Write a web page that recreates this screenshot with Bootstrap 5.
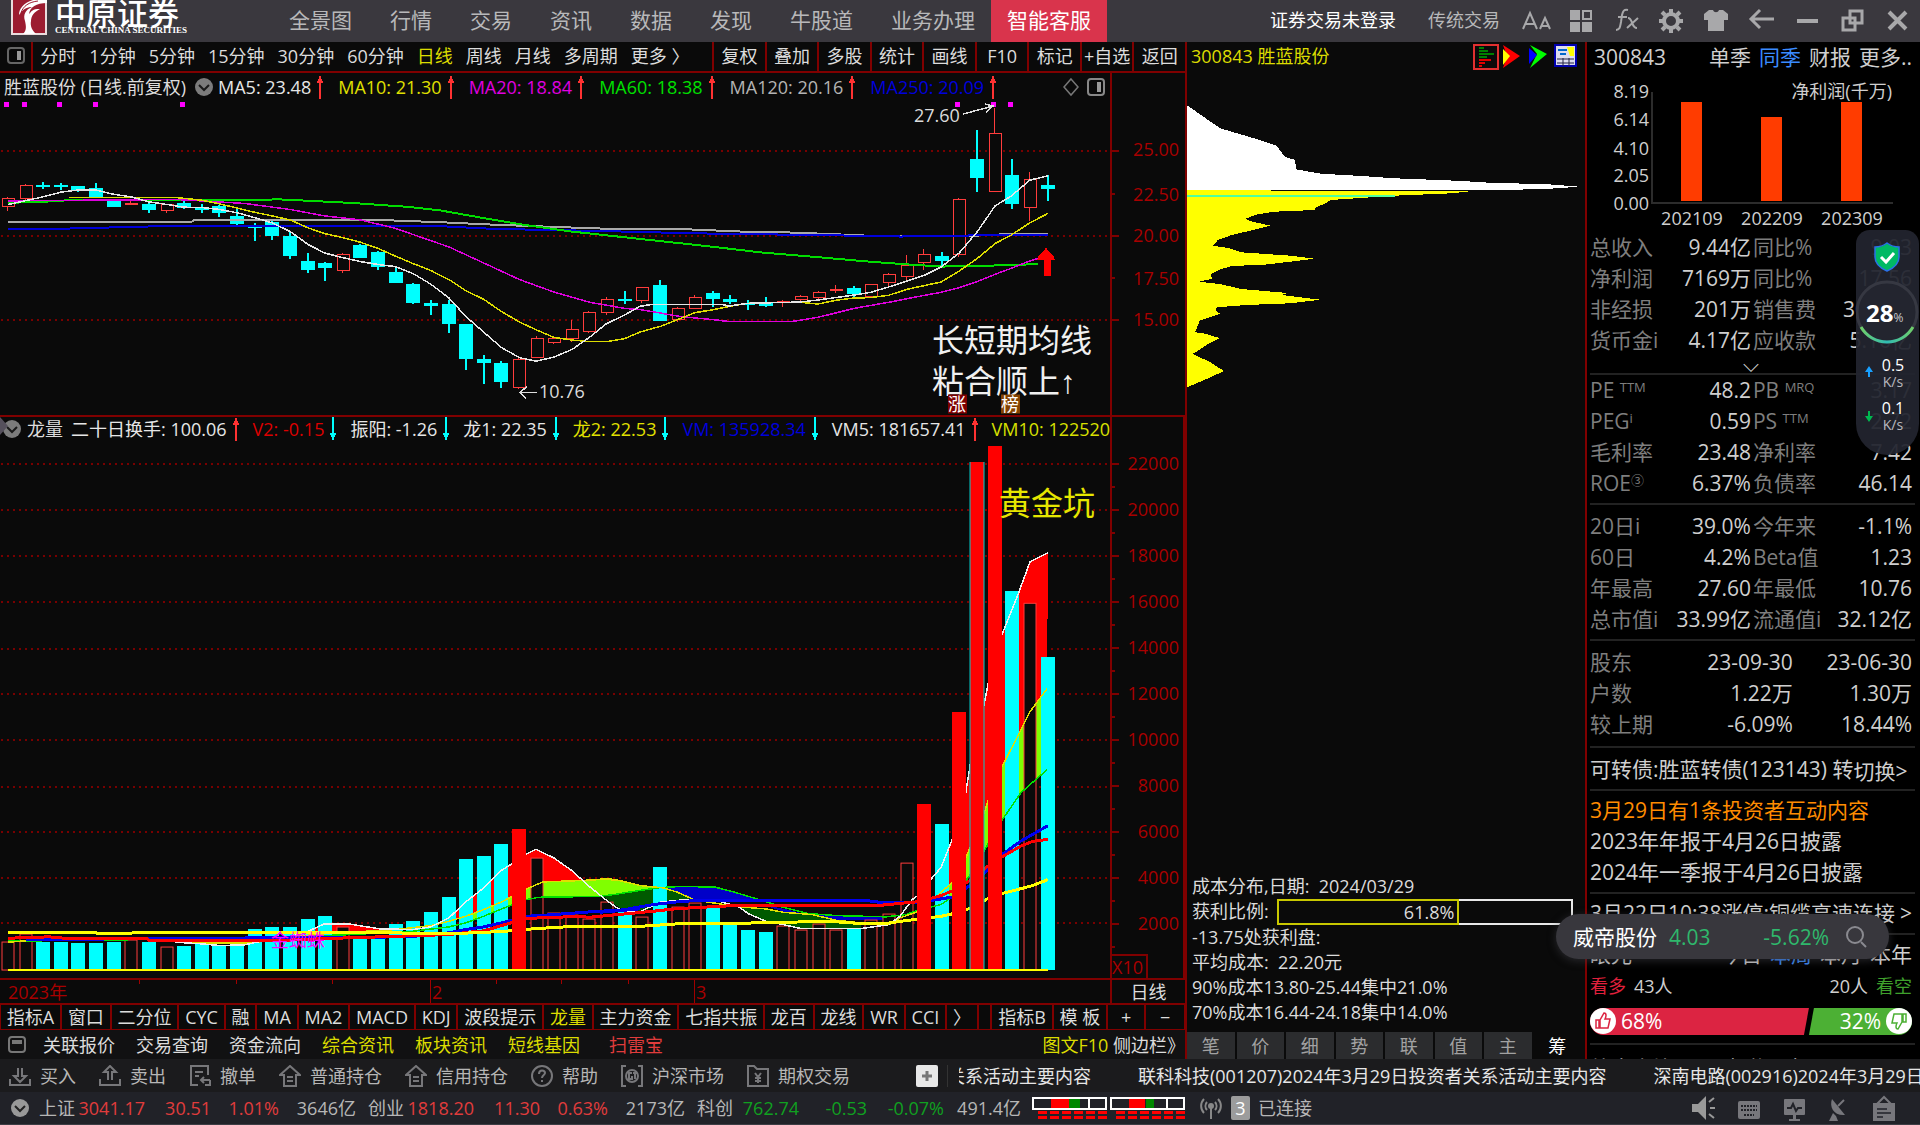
<!DOCTYPE html>
<html lang="zh-CN">
<head>
<meta charset="utf-8">
<meta name="viewport" content="width=device-width, initial-scale=1">
<title>中原证券 胜蓝股份 300843</title>
<link href="https://cdn.jsdelivr.net/npm/bootstrap@5.3.0/dist/css/bootstrap.min.css" rel="stylesheet">
<style>
:root{--line:#800000;--axis:#a80000;--ink:#dcdcdc;--yel:#dcdc00;--cy:#00ffff;--up:#ff3232}
body{background:#0a0a0a;color:var(--ink);font-family:"Open Sans","Noto Sans CJK SC",sans-serif;font-size:18px;line-height:24px;overflow:hidden}
a,button{color:inherit;text-decoration:none;white-space:nowrap}
button{background:none;border:0;padding:0}
svg{display:block;flex:none}
.topbar{height:42px;background:#3a383e;color:#b8b8ba;padding-left:11px;padding-right:12px}
.brand-box{width:278px}
.brand-cn{font-family:"Noto Sans CJK SC",sans-serif;font-weight:500;font-size:31px;line-height:24px;color:#fff}
.brand-en{font-family:"Liberation Serif",serif;font-weight:700;font-size:9px;line-height:12px;color:#fff;white-space:nowrap}
.mainnav{gap:38px;font-size:21px;padding-bottom:3px}
.service{font-size:21px;background:#d9344c;color:#fff;height:42px;padding:0 16px 3px;margin-left:16px}
.toplinks{gap:32px;padding-bottom:3px;margin-right:20px}
.work{display:grid;grid-template-columns:1187fr 398fr 335fr;min-height:0}
.edge{border-right:2px solid var(--line)}
.periods{height:31px;border-bottom:2px solid var(--line)}
.periods button{padding-bottom:2px}
.plist{gap:13px;width:714px;padding-left:7px}
.pin{width:35px;border-right:2px solid var(--line)}
.tools{width:39.9%}
.tool{flex:1 1 0;border-left:2px solid var(--line);overflow:hidden}
.yel{color:var(--yel)}
.plot{min-height:0}
.price{flex:344 1 0;border-bottom:2px solid var(--line)}
.vol{flex:563 1 0;border-bottom:2px solid var(--line)}
.canvas{min-width:0;overflow:hidden}
.canvas svg.draw,.chips svg.draw{position:absolute;inset:0;width:100%;height:100%}
.axis{width:75px;flex:none;border-left:2px solid var(--line);color:var(--axis)}
.vol .axis{border-right:2px solid var(--line)}
.tick-label{position:absolute;right:6px;transform:translateY(-50%)}
.vol .tick-label{right:4px}
.legend-row{position:relative;z-index:2;white-space:nowrap}
.legend-row .ind{display:inline-flex;align-items:center;gap:5px;margin-right:13px}
#maLegend{padding:2px 0 0 4px}
#maLegend .ind{margin-right:14px}
.note{position:absolute;white-space:nowrap;transform:translateY(-50%)}
.big{font-size:32px;color:#f0f0f0}
.big i{font-family:"Liberation Sans",sans-serif;font-style:normal}
.tag{font-size:18px;line-height:19px;color:#fff;width:19px}
.x10{position:absolute;left:0;bottom:0;border:2px solid var(--line);border-left:0;border-bottom:0;line-height:22px;padding:0 3px 0 0}
.dates{height:24px;color:var(--axis);border-bottom:1px solid var(--line)}
.dates .cell{width:75px;border-left:2px solid var(--line);color:var(--ink)}
.datelab{position:absolute;top:0}
.tabs{height:26px;border:1px solid var(--line)}
.tabs button{border-right:2px solid var(--line);flex:1 1 auto;padding:0 5px}
.tabs button.step{flex:0 0 38px;padding:0}
.tabs button:last-child{border-right:0}
.links{height:29px;background:#111112;padding-left:8px;gap:21px}
.chips{flex:1 1 auto;min-height:0}
.cost{padding:0 12px 6px 5px;line-height:25px}
.ratio{height:26px;border:2px solid #e8e8e8;flex:1}
.ratio div{border:2px solid #c8c800;margin:-2px;height:26px;line-height:22px;padding-right:3px;text-align:right}
.minis{gap:2px;height:28px;padding:1px 4px 0 0}
.minis button{flex:1;background:#2b2c2e;color:#a2a2a2}
.minis button.on{background:none;color:#fff}
.fin{background:#000;font-size:21px;line-height:31px;padding:0 8px 0 3px;overflow:hidden;color:#cfcfcf;border-left:2px solid var(--line)}
.rule{height:2px;background:#222;margin-right:-3px}
.fin table{width:100%;table-layout:fixed}
.fin td,.fin th{padding:0;height:31px;white-space:nowrap;font-weight:400}
.fin th{color:#7e7e7e}
.fin td{text-align:right}
.fin th.mid{padding-left:2px}
.fin sup{font-size:13px;top:-6px}
#t3{margin-top:6px}
#t4{margin:6px 0}
.bond{margin:7px 0 4px;line-height:28px}
.bond a{padding-top:2px}
.profit{height:159px;position:relative;font-size:18px;line-height:20px}
.profit .yl{position:absolute;right:263px;transform:translateY(-50%)}
.profit .xl{position:absolute;transform:translate(-50%,-50%)}
.profit svg{position:absolute;top:0;left:0}
.vote{height:27px;color:#fff;line-height:27px;margin:6px 0 8px}
.vote .bull{flex:68;background:#dc2442;clip-path:polygon(0 0,100% 0,calc(100% - 5px) 100%,0 100%);border-radius:14px 0 0 14px}
.vote .bear{flex:32;background:#4cb034;clip-path:polygon(5px 0,100% 0,100% 100%,0 100%);border-radius:0 14px 14px 0}
#voteText{font-size:18px;padding-top:1px}
.orders{height:33px;background:#1b1b1d;color:#b6b6b6}
.order-list{width:959px;padding-left:9px}
.orders button{display:inline-flex;align-items:center;gap:9px;margin-right:23px}
.orders .bar{width:1px;height:22px;background:#333;margin:0 11px 0 9px}
.ic{fill:none;stroke:#77777a;stroke-width:2}
.news{overflow:hidden;white-space:nowrap;color:#e6e6e6;gap:47px}
.news span:first-child{margin-left:-12px}
.status{height:33px;background:#212228;border-bottom:1px solid #3d3d44;color:#b6b6b6}
.q{display:inline-block;text-align:right;white-space:nowrap}
.w-0{width:70px}.w-a{width:66px}.w-b{width:66px}.w-c{width:68px}.w-d{width:77px}
.rd{color:#e03c3c}.gn{color:#10a020}
.cnt{background:#9c9c9c;color:#fff;width:19px;height:24px;border-radius:2px;text-align:center}
.speed{position:absolute;right:1px;top:230px;width:63px;height:225px;background:rgba(34,36,47,.94);border-radius:14px 14px 32px 32px;color:#fff;z-index:5}
.speed .num{position:absolute;font-size:16px;line-height:18px;width:40px;left:17px;text-align:center}
.speed .up{top:126px}.speed .down{top:169px}
.speed .unit{font-size:14px;line-height:16px;color:#b8b8be}
.speed .pct{position:absolute;left:10px;top:68px;font-size:24px;line-height:30px;font-weight:700}
.speed .pct span{font-size:12px;font-weight:400;color:#c8c8cc}
.pill{position:absolute;right:31px;top:914px;width:333px;height:45px;border-radius:23px;background:#38373d;box-shadow:0 2px 8px rgba(60,60,66,.6);z-index:5;font-size:21px;color:#fff;padding:0 20px 0 17px}
.pill .g{color:#2fb86c}
.blu{color:#3a8cff}.org{color:#ff8c00}.bullc{color:#e0203c}.bearc{color:#3fa02c}
</style>
<script src="https://cdn.jsdelivr.net/npm/bootstrap@5.3.0/dist/js/bootstrap.bundle.min.js"></script>
</head>
<body class="d-flex flex-column vh-100 position-relative">

<header class="topbar d-flex align-items-center flex-shrink-0">
  <div class="brand-box d-flex align-items-start h-100 flex-shrink-0">
    <svg width="36" height="35" viewBox="0 0 36 35"><rect width="36" height="35" fill="#e9dcdd"/><rect x="2" y="0" width="32" height="33" fill="#9c1c30"/><path d="M36 0H22C12 3 8 9 8 15c4-6 8-8 13-8-7 3-9 8-7 14 1 5 2 9-2 13h13c-4-4-6-8-5-13 0-5 3-9 9-12-8 0-8 2-11 5 1-7 7-11 18-11z" fill="#fff"/><path d="M10 13C12 6 18 2 27 1" stroke="#9c1c30" fill="none"/></svg>
    <div class="ps-2"><div class="brand-cn">中原证券</div><div class="brand-en">CENTRAL CHINA SECURITIES</div></div>
  </div>
  <nav class="mainnav d-flex">
    <a href="#">全景图</a><a href="#">行情</a><a href="#">交易</a><a href="#">资讯</a><a href="#">数据</a><a href="#">发现</a><a href="#">牛股道</a><a href="#">业务办理</a>
  </nav>
  <button class="service">智能客服</button>
  <div class="ms-auto d-flex align-items-center">
    <div class="toplinks d-flex"><a href="#" class="text-white">证券交易未登录</a><a href="#">传统交易</a></div>
    <svg width="388" height="40" viewBox="1520 0 388 40" fill="none" stroke="#a8a8aa" stroke-width="2">
      <path d="M1523 28l7-16 7 16M1525 23h10M1540 28l5-11 5 11M1541 25h8"/>
      <g fill="#a8a8aa" stroke="none"><path d="M1570 9h10v10h-10zM1570 21h10v10h-10zM1582 21h10v10h-10z"/></g><rect x="1583" y="10" width="8" height="8"/>
      <path d="M1616 29c4 0 4-3 5-8l1-7c1-4 2-6 6-5M1618 16h9M1628 17c5 0 3 10 9 10M1638 17l-11 10"/>
      <circle cx="1671" cy="20" r="7" stroke-width="4"/><path d="M1671 8v4M1671 28v4M1659 20h4M1679 20h4M1662 11l3 3M1677 26l3 3M1680 11l-3 3M1665 26l-3 3" stroke-width="4"/>
      <path d="M1709 9l-5 4v6h4v11h16V19h4v-6l-5-4h-4c-1 3-5 3-6 0z" fill="#a8a8aa" stroke="none"/>
      <path d="M1760 9l-9 9 9 9M1751 18h23" stroke-width="3"/>
      <path d="M1797 20h21M1889 11l17 17M1906 11l-17 17" stroke-width="4"/>
      <path d="M1850 10h12v12h-12zM1843 17h12v12h-12z" stroke-width="3"/>
    </svg>
  </div>
</header>

<main class="work flex-grow-1">
  <section class="d-flex flex-column edge" style="min-width:0">
    <div class="periods d-flex flex-shrink-0">
      <button class="pin d-flex align-items-center justify-content-center" aria-label="侧栏"><svg width="18" height="18"><rect x="1" y="1" width="16" height="15" rx="3" fill="none" stroke="#666" stroke-width="2"/><path d="M10 4h4v9h-4z" fill="#999"/></svg></button>
      <div class="plist d-flex align-items-center flex-grow-1">
        <button>分时</button><button>1分钟</button><button>5分钟</button><button>15分钟</button><button>30分钟</button><button>60分钟</button><button class="yel">日线</button><button>周线</button><button>月线</button><button>多周期</button><button>更多 〉</button>
      </div>
      <div class="tools d-flex flex-shrink-0">
        <button class="tool">复权</button><button class="tool">叠加</button><button class="tool">多股</button><button class="tool">统计</button><button class="tool">画线</button><button class="tool">F10</button><button class="tool">标记</button><button class="tool">+自选</button><button class="tool">返回</button>
      </div>
    </div>

    <div class="plot price d-flex">
      <div class="canvas flex-grow-1 position-relative" id="priceCanvas">
        <div class="legend-row d-flex align-items-center" id="maLegend"></div>
      </div>
      <div class="axis position-relative" id="priceAxis"></div>
    </div>
    <div class="plot vol d-flex">
      <div class="canvas flex-grow-1 position-relative" id="volCanvas">
        <div class="legend-row d-flex align-items-center" id="volLegend"></div>
      </div>
      <div class="axis position-relative" id="volAxis"><span class="x10">X10</span></div>
    </div>

    <div class="dates d-flex flex-shrink-0">
      <div class="flex-grow-1 position-relative" id="dateAxis"></div>
      <div class="cell text-center">日线</div>
    </div>
    <div class="tabs d-flex flex-shrink-0">
      <button>指标A</button><button>窗口</button><button>二分位</button><button>CYC</button><button>融</button><button>MA</button><button>MA2</button><button>MACD</button><button>KDJ</button><button>波段提示</button><button class="yel">龙量</button><button>主力资金</button><button>七指共振</button><button>龙百</button><button>龙线</button><button>WR</button><button>CCI</button><button>〉</button><button aria-label="空"></button><button>指标B</button><button>模 板</button><button class="step">+</button><button class="step">−</button>
    </div>
    <div class="links d-flex align-items-center flex-shrink-0">
      <svg width="14" height="19" viewBox="2 0 14 19" overflow="visible"><rect x="3" y="2" width="16" height="15" rx="3" fill="none" stroke="#777" stroke-width="2"/><path d="M6 5h10v4H6z" fill="#777"/></svg>
      <a href="#">关联报价</a><a href="#">交易查询</a><a href="#">资金流向</a><a href="#" class="yel">综合资讯</a><a href="#" class="yel">板块资讯</a><a href="#" class="yel">短线基因</a><a href="#" class="rd ms-2">扫雷宝</a>
      <span class="ms-auto"><a href="#" class="yel">图文F10</a> <a href="#">侧边栏》</a></span>
    </div>
  </section>

  <section class="d-flex flex-column" style="min-width:0">
    <div class="d-flex align-items-center ps-1 pe-2 pb-1 flex-shrink-0" style="height:31px">
      <span class="yel">300843 胜蓝股份</span>
      <svg class="ms-auto" width="104" height="28" viewBox="1473 43 104 28">
        <rect x="1474" y="46" width="24" height="24" fill="#0a0a0a" stroke="#e03030" stroke-width="2"/>
        <path d="M1479 49h5M1479 52h9M1479 55h15M1479 58h8" stroke="#008000" stroke-width="2"/><path d="M1479 61h12M1479 64h6M1479 67h3" stroke="#e00000" stroke-width="2"/>
        <path d="M1503 46l17 11-17 12 4-12z" fill="#f00"/><path d="M1503 50l7 7-7 9z" fill="#ff0"/>
        <path d="M1530 46l17 9-17 14 7-14z" fill="#0f0"/><path d="M1529 49l8 7-8 9z" fill="#00f"/>
        <rect x="1555" y="46" width="21" height="21" fill="#dde" stroke="#0000b0" stroke-width="2"/><path d="M1567 48h7v9h-4z" fill="#ff0"/><path d="M1558 51h9M1560 55h6" stroke="#06c" stroke-width="2"/><path d="M1557 60h17M1557 64h17M1563 59v8M1569 59v8" stroke="#224" />
      </svg>
    </div>
    <div class="chips position-relative" id="chips"></div>
    <div class="cost flex-shrink-0">
      <div>成本分布,日期:&nbsp; 2024/03/29</div>
      <div class="d-flex"><span class="me-2">获利比例:</span><div class="ratio"><div id="ratioFill">61.8%</div></div></div>
      <div>-13.75处获利盘:</div>
      <div>平均成本:&nbsp; 22.20元</div>
      <div>90%成本13.80-25.44集中21.0%</div>
      <div>70%成本16.44-24.18集中14.0%</div>
    </div>
    <div class="minis d-flex flex-shrink-0"><button>笔</button><button>价</button><button>细</button><button>势</button><button>联</button><button>值</button><button>主</button><button class="on">筹</button></div>
  </section>

  <section class="fin">
    <div class="d-flex ps-1"><span>300843</span><div class="ms-auto d-flex gap-2"><a href="#">单季</a><a href="#" class="blu">同季</a><a href="#">财报</a><a href="#">更多..</a></div></div>
    <div class="profit" id="profit"></div>
    <table id="t1"></table>
    <div class="text-center" style="line-height:17px">⌵</div>
    <div class="rule"></div>
    <table id="t2"></table>
    <div class="rule mt-1"></div>
    <table id="t3"></table>
    <div class="rule mt-1"></div>
    <table id="t4"></table>
    <div class="rule"></div>
    <div class="bond d-flex text-nowrap"><span>可转债:胜蓝转债(123143) 转</span><a href="#">切换&gt;</a></div>
    <div class="rule mb-1"></div>
    <div class="org">3月29日有1条投资者互动内容</div>
    <div>2023年年报于4月26日披露</div>
    <div>2024年一季报于4月26日披露</div>
    <div class="rule mt-1 mb-1"></div>
    <div class="d-flex justify-content-between text-nowrap"><span>3月22日10:38涨停:铜缆高速连接</span><a href="#">&gt;</a></div>
    <div class="rule mt-1 mb-1"></div>
    <div class="d-flex justify-content-end gap-2"><span class="me-auto">眼光</span><span>今日</span><span class="blu">本周</span><span>本月</span><span>本年</span></div>
    <div class="d-flex" id="voteText"><span class="bullc">看多</span><span class="ms-2">43人</span><span class="ms-auto me-2">20人</span><span class="bearc">看空</span></div>
    <div class="vote d-flex">
      <div class="bull d-flex align-items-center"><svg width="27" height="27"><circle cx="13" cy="13" r="13" fill="#fff"/><path d="M6 12h3v8H6zM10 12l4-7c3 0 2 4 1 6h5l-2 9h-8z" fill="none" stroke="#dc2442" stroke-width="1.5"/></svg><span class="ps-1">68%</span></div>
      <div class="bear d-flex align-items-center justify-content-end"><span class="pe-1">32%</span><svg width="27" height="27"><circle cx="14" cy="13" r="13" fill="#fff"/><path d="M21 14h-3V6h3zM17 14l-4 7c-3 0-2-4-1-6H7l2-9h8z" fill="none" stroke="#4cb034" stroke-width="1.5"/></svg></div>
    </div>
    <div class="rule mb-2"></div>
    <div class="d-flex justify-content-between"><span>外盘占比</span><span>机构研报</span><span>3.3%</span></div>
  </section>
</main>

<div class="orders d-flex align-items-center flex-shrink-0">
  <div class="order-list d-flex align-items-center text-nowrap flex-shrink-0">
    <button><svg width="22" height="22" class="ic"><path d="M1 14v6h20v-6M9 3v8H5l6 6 6-6h-4V3"/></svg>买入</button>
    <button><svg width="22" height="22" class="ic"><path d="M1 14v6h20v-6M9 15V7H5l6-6 6 6h-4v8"/></svg>卖出</button>
    <button><svg width="22" height="22" class="ic"><path d="M9 20H2V1h17v9M6 7h8M6 11h4M21 15h-8M15 12l-3 3 3 3M21 15v5h-5"/></svg>撤单</button>
    <button><svg width="22" height="22" class="ic"><path d="M1 10L11 1l10 9h-4v11H5V10zM8 12h6M8 16h6"/></svg>普通持仓</button>
    <button><svg width="22" height="22" class="ic"><path d="M1 10L11 1l10 9h-4v11H5V10zM8 12h6M8 16h6"/></svg>信用持仓</button>
    <button><svg width="22" height="22" class="ic"><circle cx="11" cy="11" r="10"/><path d="M8 9c0-5 6-4 6-1 0 2-3 2-3 5M11 15v2"/></svg>帮助</button>
    <button><svg width="22" height="22" class="ic"><path d="M5 1H1v20h4M17 1h4v20h-4"/><circle cx="11" cy="11" r="6"/><path d="M11 8H8v6h3v-3M12 8h4M14 8v6"/></svg>沪深市场</button>
    <button><svg width="22" height="22" class="ic"><path d="M1 21V1h6l3 3h11v17zM8 8l3 4 3-4M11 12v6M8 13h6M8 16h6"/></svg>期权交易</button>
    <button class="ms-auto me-0" aria-label="添加"><svg width="22" height="22"><rect width="22" height="22" rx="2" fill="#e8e8e8"/><path d="M6 11h10M11 6v10" stroke="#777" stroke-width="3"/></svg></button>
    <span class="bar"></span>
  </div>
  <div class="news d-flex flex-grow-1"><span>关系活动主要内容</span><span>联科科技(001207)2024年3月29日投资者关系活动主要内容</span><span>深南电路(002916)2024年3月29日</span></div>
</div>

<footer class="status d-flex align-items-center flex-shrink-0">
  <svg width="39" height="20" viewBox="0 0 39 20"><circle cx="20" cy="10" r="9" fill="#999"/><path d="M15 8l5 5 5-5" fill="none" stroke="#222" stroke-width="2"/></svg>
  <span>上证</span><span class="q rd w-0">3041.17</span><span class="q rd w-b">30.51</span><span class="q rd w-c">1.01%</span><span class="q w-d">3646亿</span>
  <span class="ms-2 ps-1">创业</span><span class="q rd w-0">1818.20</span><span class="q rd w-b">11.30</span><span class="q rd w-c">0.63%</span><span class="q w-d">2173亿</span>
  <span class="ms-2 ps-1">科创</span><span class="q gn w-a">762.74</span><span class="q gn w-c">-0.53</span><span class="q gn w-d">-0.07%</span><span class="q w-d">491.4亿</span>
  <svg class="ms-2" width="162" height="24" viewBox="1029 0 162 24" id="meters"></svg>
  <svg class="ms-2" width="24" height="22" fill="none" stroke="#888" stroke-width="2"><circle cx="12" cy="9" r="2" fill="#888"/><path d="M12 10v12M8 5a6 6 0 000 8M16 5a6 6 0 010 8M5 2a10 10 0 000 14M19 2a10 10 0 010 14"/></svg>
  <span class="cnt ms-2 me-2">3</span><span>已连接</span>
  <svg class="ms-auto" width="228" height="30" viewBox="1692 0 228 30" fill="#77777c">
    <path d="M1692 11h6l8-8v24l-8-8h-6z" fill="#999"/><path d="M1709 9l5-4M1710 15h5M1709 21l5 4" stroke="#999" stroke-width="2"/>
    <rect x="1738" y="8" width="22" height="18" rx="2"/><path d="M1741 13h16M1741 17h16M1744 22h10" stroke="#212228" stroke-width="2" stroke-dasharray="2 1"/>
    <rect x="1784" y="6" width="21" height="16" rx="1"/><path d="M1789 26h11v2h-11zM1793 22h3v4h-3z"/><path d="M1787 15h4l2-4 3 7 2-3h4" fill="none" stroke="#212228" stroke-width="2"/>
    <path d="M1832 6c-3 8 2 17 13 16zM1833 20l-4 8h9l-2-5z"/><path d="M1838 13l6-6" stroke="#77777c" stroke-width="2"/>
    <rect x="1873" y="10" width="22" height="18"/><path d="M1877 11l7-7 7 7" fill="none" stroke="#77777c" stroke-width="2"/><path d="M1877 16h10M1877 20h14M1877 24h6" stroke="#212228" stroke-width="1.5"/>
  </svg>
</footer>

<aside class="speed">
  <svg width="63" height="225" class="position-absolute">
    <defs><linearGradient id="arc"><stop offset="0" stop-color="#6fce6a"/><stop offset=".5" stop-color="#2fbcb4"/><stop offset="1" stop-color="#6fce6a"/></linearGradient></defs>
    <path d="M31 13c4 3 8 4 12 4v10c0 7-5 11-12 14-7-3-12-7-12-14V17c4 0 8-1 12-4z" fill="#00b964" stroke="#2a70e8" stroke-width="1.5"/>
    <path d="M25 27l5 5 8-9" fill="none" stroke="#fff" stroke-width="3"/>
    <circle cx="31" cy="82" r="30" fill="#23252f" stroke="#363842" stroke-width="3"/>
    <path d="M5 97a30 30 0 0052 0" fill="none" stroke="url(#arc)" stroke-width="3"/>
    <path d="M13 136l4 6h-3v5h-2v-5H9z" fill="#18a0ff"/><path d="M13 192l-4-6h3v-5h2v5h3z" fill="#00b850"/>
  </svg>
  <div class="pct">28<span>%</span></div>
  <div class="num up"><div>0.5</div><div class="unit">K/s</div></div>
  <div class="num down"><div>0.1</div><div class="unit">K/s</div></div>
</aside>

<div class="pill d-flex align-items-center"><span>威帝股份</span><span class="g ms-2 ps-1">4.03</span><span class="g ms-auto me-3">-5.62%</span><svg width="24" height="24" fill="none" stroke="#8a8a90" stroke-width="2"><circle cx="10" cy="10" r="8"/><path d="M16 17l5 5"/></svg></div>

<script>
const $ = id => document.getElementById(id);
const STEP = 17.62, cx = i => Math.round(8 + i * STEP);
const rect = (x,y,w,h,a) => `<rect x="${x}" y="${y}" width="${w}" height="${h}" ${a}/>`;
const line = (pts,c,w=1.5) => `<path d="M${pts.map(p=>p.map(v=>v.toFixed(1)).join(' ')).join('L')}" fill="none" stroke="${c}" stroke-width="${w}"/>`;
const poly = (pts,c) => `<path d="M${pts.map(p=>p.map(v=>v.toFixed(1)).join(' ')).join('L')}Z" fill="${c}"/>`;
const pairs = a => a.reduce((r,v,i)=>(i%2?r[r.length-1].push(v):r.push([v]),r),[]);
const grid = ys => ys.map(y=>`<path d="M1 ${y}H1109" stroke="#780000" stroke-width="2" stroke-dasharray="2 4"/>`).join('');
const pct = (v,o,s) => ((v-o)/s*100).toFixed(2)+'%';
const svg = (host,vb,body) => host.insertAdjacentHTML('afterbegin',`<svg class="draw" viewBox="${vb}" preserveAspectRatio="none" shape-rendering="crispEdges">${body}</svg>`);

/* ---- indicator legends ---- */
const arrow = d => d>0 ? '<svg width="8" height="24"><path d="M4 24V1M1 7h6M2 5h4M3 3h2" stroke="#ff3232" stroke-width="2" fill="none"/></svg>'
                       : '<svg width="8" height="24"><path d="M4 0v23M1 17h6M2 19h4M3 21h2" stroke="#0ff" stroke-width="2" fill="none"/></svg>';
const item = ([t,c,d]) => `<span class="ind" style="color:${c}">${t}${arrow(d)}</span>`;
const chev = '<svg width="20" height="20"><circle cx="10" cy="10" r="9" fill="#7c7c7c"/><path d="M5 8l5 5 5-5" fill="none" stroke="#1a1a1a" stroke-width="2"/></svg>';
$('maLegend').innerHTML = `<span class="me-2">胜蓝股份 (日线.前复权)</span>${chev}<span class="ps-1"></span>` +
 [['MA5: 23.48','#e6e6e6',1],['MA10: 21.30','#e0e000',1],['MA20: 18.84','#e000e0',1],['MA60: 18.38','#00e000',1],['MA120: 20.16','#b4b4b4',1],['MA250: 20.09','#0000dc',1]].map(item).join('') +
 '<svg class="ms-auto me-1" width="44" height="20" fill="none"><path d="M9 2l7 8-7 8-7-8z" stroke="#777" stroke-width="1.5"/><rect x="26" y="2" width="16" height="16" rx="3" stroke="#888" stroke-width="2"/><path d="M35 5h4v10h-4z" fill="#999"/></svg>';
$('volLegend').innerHTML = `<svg width="23" height="24"><circle cx="12" cy="12" r="9" fill="#7c7c7c"/><path d="M7 10l5 5 5-5" fill="none" stroke="#1a1a1a" stroke-width="2"/><path d="M0 0l8 9-8 9z" fill="#55505c"/></svg><span class="mx-1">龙量</span><span class="ps-1"></span>` +
 [['二十日换手: 100.06','#e6e6e6',1],['V2: -0.15','#dc0000',-1],['振阳: -1.26','#e6e6e6',-1],['龙1: 22.35','#e6e6e6',-1],['龙2: 22.53','#e0e000',-1],['VM: 135928.34','#0000dc',-1],['VM5: 181657.41','#e6e6e6',1],['VM10: 122520','#d8e000',1]].map(item).join('');

/* ---- daily candles: dir, high, top, bottom, low (three units per pixel) ---- */
const C = `r592,595,620,634 r553,555,597,610 c547,554,558,567 c549,554,558,570 c557,558,570,575 c549,563,590,590 c600,601,621,621 r603,609,615,615 c606,612,630,638 r612,612,633,638 c602,608,624,628 c612,624,628,638 c615,617,640,652 c625,647,671,674 c668,679,683,724 c661,667,707,719 c697,708,769,778 c760,783,809,818 c787,788,805,842 r760,763,812,818 c733,735,773,773 c752,757,801,809 c800,815,850,850 c850,851,909,913 c900,909,917,945 c899,913,971,999 c971,972,1076,1111 c1066,1076,1088,1152 c1084,1089,1147,1165 r1075,1077,1164,1168 r1008,1014,1074,1074 r1009,1015,1028,1033 r959,988,1016,1025 r932,937,997,1000 r892,898,938,944 c873,896,901,912 r860,862,903,908 c841,855,963,963 r922,925,961,966 r886,892,926,927 c873,878,896,922 c886,897,907,913 c900,908,911,930 c891,908,917,922 r900,903,910,921 r886,889,899,905 r873,875,894,896 r855,867,871,879 c858,865,883,890 r851,853,890,893 r818,821,850,857 r765,794,830,843 r747,763,788,810 c755,767,782,800 r594,596,764,770 c391,478,535,576 r323,398,575,575 c476,526,611,626 r517,536,623,663 c526,554,567,602`.split(' ');
let s = grid([151,236,320]);
C.forEach((k,i)=>{
  const [h,t,b,l]=k.slice(1).split(',').map(v=>Math.round(v/3)), x=cx(i), up=k[0]==='r';
  if(up){ s+=rect(x-6,t+.5,12,Math.max(b-t-1,1),'fill="#0a0a0a" stroke="#ff3c3c"')+(h<t?rect(x-1,h,1,t-h,'fill="#ff3c3c"'):'')+(l>b?rect(x-1,b,1,l-b,'fill="#ff3c3c"'):''); }
  else s+=rect(x-7,t,14,Math.max(b-t,2),'fill="#0ff"')+rect(x-1,h,2,l-h,'fill="#0ff"');
});
const M = (a,b)=>pairs(a).map(([x,y])=>[x/2.45,y/3]).concat(pairs(b).map(([x,y])=>[640+x/2.45,y/3]));
s+=line(M([20,664,470,664,475,660,945,660,1080,666,1200,673,1310,678,1470,685],[110,687,245,694,370,697,460,701,550,706,830,706,930,700,999,700]),'#aaa',2);
s+=line(M([20,687,170,685,390,678,1080,678,1210,686,1380,690,1568,695],[115,699,290,702,460,705,640,709,850,705,999,705]),'#0000dc',2);
s+=line(M([20,608,120,604,170,600,690,598,860,608,1000,620,1080,631,1200,657,1290,675,1400,694,1500,707,1568,716],[30,720,160,737,300,757,430,770,560,784,650,792,740,799,930,794,975,790]),'#00dc00',2);
s+=line(M([20,602,430,598,494,602,600,610,711,628,795,647,883,659,968,684,1012,703,1100,740,1185,788,1273,838,1357,875,1445,906,1530,924,1568,928],[50,938,100,949,180,958,220,964,370,964,436,951,525,924,609,906,697,885,738,876,782,862,826,844,870,822,910,804,955,782,975,774]),'#dc00dc');
s+=line(M([170,592,430,592,494,600,538,611,582,624,623,636,667,647,711,659,755,683,795,700,839,712,883,726,927,745,968,767,1012,790,1056,811,1100,838,1141,871,1185,897,1229,934,1273,965,1313,988,1357,1011,1402,1019,1445,1024,1486,1024,1530,1015],[0,995,50,978,92,958,135,937,180,928,220,918,264,909,308,907,392,906,436,911,480,900,525,893,565,892,609,885,654,867,738,845,782,812,826,775,870,730,910,704,955,668,999,640]),'#dcdc00');
s+=line(M([20,613,105,590,149,576,193,569,237,570,277,582,321,590,365,605,409,613,450,621,494,622,538,628,582,638,623,652,667,668,711,694,755,733,795,758,839,772,883,784,927,793,968,799,1012,820,1056,852,1100,893,1141,948,1185,995,1229,1042,1273,1072,1313,1082,1357,1070,1402,1047,1445,1010,1486,970,1530,944],[0,918,30,912,200,912,217,917,264,909,392,905,436,899,525,884,565,876,609,860,654,842,697,825,738,800,782,758,826,695,870,617,910,587,955,540,999,527]),'#e6e6e6');
[6,24,59,95,182,957,993,1010].forEach(x=>s+=rect(x-2,102,5,5,'fill="#f0f"'));
s+='<path d="M1046 247c2 5 9 8 9 13h-4v16h-7v-16h-7c0-5 7-8 9-13z" fill="#f00"/><path d="M963 114l30-8M985 104l8 2-7 6M520 392h17M527 386l-7 6 6 6" stroke="#ddd" stroke-width="1.5" fill="none"/>';
svg($('priceCanvas'),'0 73 1110 342',s);
const note=(id,t,x,y,c,oy,oh,col,bg)=>$(id).insertAdjacentHTML('beforeend',`<span class="note ${c}" style="left:${pct(x,0,1110)};top:${pct(y,oy,oh)};${col?'color:'+col+';':''}${bg?'background:'+bg:''}">${t}</span>`);
note('priceCanvas','27.60',914,115,'',73,342); note('priceCanvas','10.76',539,391,'',73,342);
note('priceCanvas','长短期均线',932,340,'big',73,342); note('priceCanvas','粘合顺上<i>↑</i>',932,381,'big',73,342);
note('priceCanvas','涨',948,404,'tag',73,342,'','#800000'); note('priceCanvas','榜',1001,404,'tag',73,342,'','#844200');
[['25.00',149],['22.50',194],['20.00',235],['17.50',278],['15.00',319]].forEach(([t,y])=>$('priceAxis').insertAdjacentHTML('beforeend',`<span class="tick-label" style="top:${pct(y,73,342)}">${t}</span>`));
svg($('priceAxis'),'0 73 75 342',[151,194,236,278,320].map((y,i)=>`<path d="M0 ${y}h${i%2?3:7}" stroke="#800000" stroke-width="2"/>`).join(''));

/* ---- volume: r hollow, R solid, c cyan; top edge, three units per pixel from 800 ---- */
const V=`r427 r402 c425 c425 c430 c430 c425 r420 c425 r440 c438 c430 c438 c438 c386 c381 c381 c358 c349 r380 c417 c415 c372 c363 c336 c291 c178 c169 c133 R88 r175 r338 r345 r358 r307 c330 r350 c201 r320 r310 c325 c376 c390 c395 r378 r390 r373 r390 c386 r360 r342 r188 R12 c71 R-263 R-1014 R-1063 c-626 r-590 c-429`.split(' ');
const A=a=>pairs(a).map(([x,y])=>[x/2.45,800+y/3]), B=a=>pairs(a).map(([x,y])=>[600+x/2.45,800+y/3]);
let v=grid([464,510,556,602,649,694,740,787,832,878,923]);
const tailW=[[941,868],[953,838],[965,798],[971,760],[983,710],[990,675],[1001,637],[1019,592],[1030,562],[1048,553]];
const tailY=[[941,893],[953,882],[965,860],[984,814],[990,795],[1001,769],[1021,730],[1030,712],[1047,689]];
const tailG=[[941,905],[953,897],[969,877],[986,848],[1001,822],[1021,793],[1047,770]];
v+=poly([...tailW,...tailY.slice().reverse()],'#f00');
v+=poly([...tailY,...tailG.slice().reverse()],'#80ff00');
v+=poly(A([755,395,795,373,860,374,930,388,1012,392,860,395]),'#f00');
v+=poly(A([1056,382,1100,355,1141,307,1185,265,1229,212,1260,188,1290,163,1313,149,1357,175,1402,214,1427,243,1330,247,1290,268,1229,307,1141,350]),'#f00');
v+=poly([...A([1141,350,1229,307,1290,268,1330,247,1420,243,1500,238]),...B([45,242,100,258,147,264,100,272,45,283,0,290]),...A([1320,293,1290,300,1229,328,1141,370])],'#80ff00');
v+=poly([...A([1480,292]),...B([0,290,45,283,100,272,147,266,190,278,230,300,190,302,147,308,110,335,60,335])],'#005a00');
v+=poly(B([147,264,190,261,280,262,330,278,390,302,230,302,190,278]),'#0000c8');
v+=poly(B([340,322,406,328,449,338,520,345,579,362,640,372,640,387,492,387,449,375,406,365,363,342]),'#005a00');
v+=poly(B([406,318,440,325,510,345,700,353,690,362,579,360,520,345,449,336]),'#0000c8');
let solid='';
V.forEach((k,i)=>{
  const t=Math.round(800+(+k.slice(1))/3), x=cx(i), h=970-t;
  if(k[0]==='c') v+=rect(x-7,t,14,h,'fill="#0ff"');
  else if(k[0]==='r') v+=rect(x-6,t+.5,12,h,'fill="#0a0a0a" stroke="#ff3c3c"');
  else solid+=rect(x-7,t,14,h,'fill="#f00"')+(i===55?`<path d="M${x-7} ${t}V970M${x+7} ${t}V970" stroke="#0cc"/>`:'');
});
v+=line([...A([20,425,190,422,365,420,711,412,860,405,1012,395,1100,382,1141,370,1185,350,1229,328,1290,300,1320,293,1480,290]),...B([0,290,45,283,100,272,147,264,190,261,280,262,330,278,390,300,440,320,510,342,579,348,700,352,750,345,782,330]),...tailG],'#00e000');
v+=line([...A([20,428,100,420,365,420,494,430,620,430,711,412,800,402,970,390,1056,378,1100,365,1141,350,1185,330,1229,307,1290,268,1330,247,1420,243,1500,238]),...B([0,238,45,242,100,258,155,265,190,278,230,300,277,310,340,322,406,328,449,338,520,345,579,362,640,370,708,375,735,355,782,335]),...tailY],'#e0e000');
v+=line([...A([430,428,494,433,538,438,600,436,640,425,711,412,755,395,795,373,860,374,930,388,1012,390,1056,382,1100,355,1141,307,1185,265,1229,212,1260,188,1290,163,1313,149,1357,175,1402,214,1445,262,1486,302,1515,328]),...B([60,335,100,335,147,308,190,302,277,300,340,322,363,342,406,365,449,375,492,387,640,387,708,375,735,350,765,300,782,285,810,240]),...tailW],'#f0f0f0');
v+=line([...A([65,420,1000,412,1100,400,1141,390,1185,382,1229,370,1290,350,1357,345,1445,337,1568,328]),...B([0,338,60,330,130,315,190,307,230,303,660,304,690,309,782,308,836,298,866,292,910,255,950,210,985,165,1030,125,1097,78])],'#0000f0',3);
v+=line([...A([20,416,120,412,160,416,360,417,365,422,700,422,800,417,930,412,1100,405,1141,399,1185,394,1229,378,1290,356,1357,354,1410,350,1445,353]),...B([0,350,130,335,190,327,250,323,330,318,680,318,782,306,836,288,866,272,910,240,950,200,985,172,1030,140,1060,125,1097,119])],'#f00',3);
v+=line([...A([20,399,235,399,240,403,320,403,325,399,950,399,1050,403,1100,403,1229,396,1313,387,1400,381]),...B([0,380,100,380,190,373,340,371,500,367,580,367,640,372,700,372,720,368,782,358,836,350,866,342,910,325,950,297,985,282,1060,258,1097,240])],'#ff0',3);
v+=solid+'<path d="M8 970H1048" stroke="#ff0" stroke-width="2"/>';
svg($('volCanvas'),'0 417 1110 561',v);
note('volCanvas','黄金坑',999,503,'big',417,561,'#e6e600'); note('volCanvas','金蜘蛛',271,940,'',417,561,'#f0f');
let tk='';
for(let n=1;n<=11;n++){const y=970-46*n;$('volAxis').insertAdjacentHTML('beforeend',`<span class="tick-label" style="top:${pct(y-1,417,561)}">${n*2000}</span>`);tk+=`<path d="M0 ${y}h7M0 ${y+23}h3" stroke="#800000" stroke-width="2"/>`;}
svg($('volAxis'),'0 417 75 561',tk);
document.querySelectorAll('.axis svg').forEach(e=>{e.style.position='absolute';e.style.width='100%';e.style.height='100%'});

/* ---- date axis ---- */
svg($('dateAxis'),'0 0 1110 24',[139,236,332,496,561,628].map(x=>rect(x,0,1,4,'fill="#a00000"')).join('')+[430,694].map(x=>rect(x,0,1,24,'fill="#a00000"')).join(''));
Object.assign($('dateAxis').firstChild.style,{position:'absolute',width:'100%',height:'100%'});
[['2023年',8],['2',432],['3',696]].forEach(([t,x])=>$('dateAxis').insertAdjacentHTML('beforeend',`<span class="datelab" style="left:${pct(x,0,1110)}">${t}</span>`));

/* ---- chip distribution ---- */
const D=a=>pairs(a).map(([x,y])=>[1180+x/2.119,y/3]);
svg($('chips'),'1187 73 398 801',
 poly(D([15,316,85,385,150,412,205,437,222,470,244,480,246,508,298,521,385,528,455,535,585,542,655,548,780,553,847,560,775,567,655,571,15,571]),'#fff')+
 poly(D([15,571,620,573,575,580,455,587,405,592,320,600,308,610,288,622,285,630,200,635,165,643,138,656,150,664,192,677,155,690,110,705,80,720,70,737,105,745,130,757,235,767,284,776,240,784,180,794,110,798,85,808,65,822,68,836,40,845,85,852,130,867,228,879,215,885,297,899,235,910,140,915,78,922,76,932,85,941,42,962,32,997,50,1000,84,1014,62,1030,27,1062,62,1085,93,1113,60,1135,15,1162]),'#ff0')+
 rect(1187,195,208,2,'fill="#50ffa0"'));
$('ratioFill').style.width='calc(61.8% + 2px)';

/* ---- profit bars ---- */
const p=$('profit');
p.innerHTML=`<svg width="322" height="154" viewBox="1590 73 322 154"><path d="M1652 92V203H1893" fill="none" stroke="#2c2c2c" stroke-width="2"/>${[[1681,102],[1761,117],[1841,102]].map(([x,y])=>rect(x,y,21,201-y,'fill="#ff3c00"')).join('')}</svg>`+
 [['8.19',91],['6.14',119],['4.10',148],['2.05',175],['0.00',203]].map(([t,y])=>`<span class="yl" style="top:${y-73}px">${t}</span>`).join('')+
 ['202109','202209','202309'].map((t,i)=>`<span class="xl" style="left:${102+i*80}px;top:145px">${t}</span>`).join('')+
 '<span class="position-absolute" style="right:20px;top:8px">净利润(千万)</span>';

/* ---- finance tables ---- */
const four=(id,rows)=>$(id).innerHTML='<colgroup><col style="width:24%"><col style="width:26%"><col style="width:25%"><col style="width:25%"></colgroup>'+rows.map(r=>`<tr><th>${r[0]}</th><td>${r[1]}</td><th class="mid">${r[2]}</th><td>${r[3]}</td></tr>`).join('');
four('t1',[['总收入','9.44亿','同比%','9.03'],['净利润','7169万','同比%','17.56'],['非经损','201万','销售费','3092万'],['货币金i','4.17亿','应收款','5.16亿']]);
four('t2',[['PE <sup>TTM</sup>','48.2','PB <sup>MRQ</sup>','3.17'],['PEG<sup>i</sup>','0.59','PS <sup>TTM</sup>','2.72'],['毛利率','23.48','净利率','7.42'],['ROE<sup>③</sup>','6.37%','负债率','46.14']]);
four('t3',[['20日i','39.0%','今年来','-1.1%'],['60日','4.2%','Beta值','1.23'],['年最高','27.60','年最低','10.76'],['总市值i','33.99亿','流通值i','32.12亿']]);
$('t4').innerHTML='<colgroup><col style="width:24%"><col style="width:39%"><col style="width:37%"></colgroup>'+[['股东','23-09-30','23-06-30'],['户数','1.22万','1.30万'],['较上期','-6.09%','18.44%']].map(r=>`<tr><th>${r[0]}</th><td>${r[1]}</td><td>${r[2]}</td></tr>`).join('');

/* ---- market breadth meters ---- */
$('meters').innerHTML=[1032,1110].map((x,k)=>rect(x+1,2,73,11,'fill="#212228" stroke="#fff" stroke-width="2"')+rect(x+19,3,k?16:18,9,'fill="#f00"')+rect(x+(k?36:37),3,k?8:11,9,'fill="#080"')+rect(x+56,2,2,11,'fill="#fff"')+
 [0,1,2,3,4,5].map(i=>rect(x+6+i*12,15,9,3,'fill="#f00"')+rect(x+6+i*12,20,9,3,'fill="#f00"')).join('')).join('');
</script>
</body>
</html>
